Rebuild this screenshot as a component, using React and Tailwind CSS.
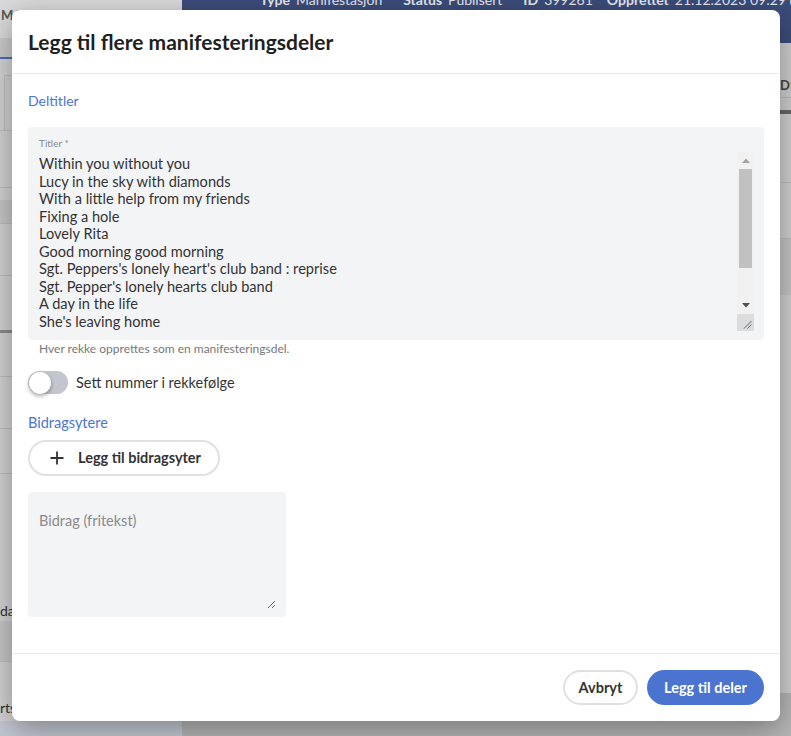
import React from "react";

const titles = [
  "Within you without you",
  "Lucy in the sky with diamonds",
  "With a little help from my friends",
  "Fixing a hole",
  "Lovely Rita",
  "Good morning good morning",
  "Sgt. Peppers's lonely heart's club band : reprise",
  "Sgt. Pepper's lonely hearts club band",
  "A day in the life",
  "She's leaving home",
  "Getting better",
  "Being for the benefit of Mr. Kite!",
  "When I'm sixty-four",
].join("\n");

function Background() {
  return (
    <div className="flex h-[736px] w-[791px]">
      <div className="flex w-[182px] shrink-0 flex-col bg-[#d3d3d3]">
        <div className="h-[38px] overflow-hidden whitespace-nowrap bg-[#dadada] pt-[6px] pl-[1px] text-[13px] font-bold leading-[18px] text-[#555]">MANIFESTASJON</div>
        <div className="h-[19px] bg-[#cbcbcb]"></div>
        <div className="h-[2px] bg-[#4b6cba]"></div>
        <div className="h-[16px] bg-[#d4d4d4]"></div>
        <div className="ml-[4px] h-[55px] border-t border-l border-[#bdbdbd] bg-[#d0d0d0]"></div>
        <div className="h-[57px] border-t border-[#bdbdbd] bg-[#d2d2d2]"></div>
        <div className="h-[13px] border-t border-[#bdbdbd] bg-[#d2d2d2]"></div>
        <div className="h-[23px] bg-[#c6c6c6]"></div>
        <div className="h-[52px] border-t border-[#bdbdbd] bg-[#d2d2d2]"></div>
        <div className="h-[55px] border-t border-[#bdbdbd] bg-[#d2d2d2]"></div>
        <div className="h-[3px] bg-[#8a8a8a]"></div>
        <div className="h-[43px] bg-[#d2d2d2]"></div>
        <div className="h-[52px] border-t border-[#bdbdbd] bg-[#d2d2d2]"></div>
        <div className="h-[45px] border-t border-[#bdbdbd] bg-[#d2d2d2]"></div>
        <div className="h-[128px] border-t border-[#bdbdbd] bg-[#d2d2d2]"></div>
        <div className="h-[20px] bg-[#d2d2d2] pt-[1px] text-[14px] leading-[18px] text-[#333]">da</div>
        <div className="h-[40px] bg-[#c6c6c6]"></div>
        <div className="h-[60px] border-t border-[#bdbdbd] bg-[#d2d2d2] pt-[37px] text-[14px] leading-[18px] text-[#333]">rts</div>
        <div className="flex-1 bg-[#c3c7d2]"></div>
      </div>
      <div className="flex min-w-0 flex-1 flex-col bg-[#cbcbcb]">
        <div className="h-[43px] overflow-hidden bg-[#3c4d7a]">
          <div className="-mt-[9px] flex whitespace-nowrap pl-[78px] text-[14px] leading-[18px] text-[#e6e8f0]">
            <span className="font-bold">Type</span>
            <span className="ml-[6px]">Manifestasjon</span>
            <span className="ml-[21px] font-bold">Status</span>
            <span className="ml-[6px]">Publisert</span>
            <span className="ml-[21px] font-bold">ID</span>
            <span className="ml-[6px]">399261</span>
            <span className="ml-[14px] font-bold">Opprettet</span>
            <span className="ml-[6px]">21.12.2023 09:29 (D</span>
          </div>
        </div>
        <div className="flex h-[54px] justify-end bg-[#cdcdcd]">
          <div className="w-[11px] overflow-hidden pt-[33px] text-[13px] font-bold leading-[18px] text-[#444]">DE</div>
        </div>
        <div className="h-[13px] border-t border-[#bbbbbb] bg-[#cdcdcd]"></div>
        <div className="flex justify-end"><div className="h-[4px] w-[11px] bg-[#666]"></div></div>
        <div className="h-[68px] bg-[#cfcfcf]"></div>
        <div className="h-[56px] border-t border-[#bbbbbb] bg-[#cfcfcf]"></div>
        <div className="h-[57px] border-t border-[#bbbbbb] bg-[#c4c4c4]"></div>
        <div className="h-[398px] bg-[#cfcfcf]"></div>
        <div className="flex-1 bg-[#b6b6b6] pl-[108px] pt-[3px] text-[14px] leading-[18px] text-[#222]">A day in the life</div>
      </div>
    </div>
  );
}

function FakeScrollbar() {
  return (
    <div className="flex w-[17px] shrink-0 flex-col bg-[#f1f1f1]">
      <div className="flex h-[17px] items-center justify-center">
        <svg width="8" height="5" viewBox="0 0 8 5"><path d="M0 5L4 0.5L8 5Z" fill="#a3a3a3" /></svg>
      </div>
      <div className="mx-[2px] h-[99px] bg-[#c1c1c1]"></div>
      <div className="flex-1"></div>
      <div className="flex h-[17px] items-center justify-center">
        <svg width="8" height="5" viewBox="0 0 8 5"><path d="M0 0L8 0L4 4.5Z" fill="#505050" /></svg>
      </div>
      <div className="flex h-[17px] items-end justify-end bg-[#dcdcdc] p-[2px]">
        <svg width="9" height="9" viewBox="0 0 9 9" stroke="#555" strokeWidth="0.9">
          <path d="M1 8.5L8.5 1M4.5 8.5L8.5 4.5" />
        </svg>
      </div>
    </div>
  );
}

function Modal() {
  return (
    <div className="absolute left-[12px] top-[10px] flex h-[711px] w-[768px] flex-col rounded-[8px] bg-white font-['Lato',sans-serif] text-[#222] shadow-[0_8px_30px_rgba(0,0,0,0.35)]">
      <div className="flex h-[64px] items-center border-b border-[#ececec] px-[16px]">
        <h1 className="text-[21px] font-bold text-[#1f1f1f]">Legg til flere manifesteringsdeler</h1>
      </div>
      <div className="flex flex-1 flex-col px-[16px] pt-[18px]">
        <div className="text-[14px] leading-[18px] text-[#4a74d6]">Deltitler</div>
        <div className="mt-[17px] h-[213px] rounded-[4px] bg-[#f3f4f6] pl-[11px] pr-[10px] pt-[10px]">
          <div className="text-[10px] leading-[12px] text-[#888]">Titler *</div>
          <div className="mt-[3px] flex h-[179px]">
            <textarea
              readOnly
              value={titles}
              className="block h-full min-w-0 flex-1 resize-none overflow-hidden bg-transparent p-0 pt-[3px] font-['Lato',sans-serif] text-[14.6px] leading-[17.5px] text-[#333] outline-none"
            />
            <FakeScrollbar />
          </div>
        </div>
        <div className="mt-[3px] pl-[11px] text-[12px] leading-[12px] text-[#777]">Hver rekke opprettes som en manifesteringsdel.</div>
        <div className="mt-[16px] flex items-center gap-[8px]">
          <div className="flex h-[23px] w-[40px] items-center rounded-full bg-[#c3c5cf]">
            <div className="ml-[1px] h-[22px] w-[22px] rounded-full bg-white shadow-[0_2px_4px_rgba(0,0,0,0.35)]"></div>
          </div>
          <span className="text-[14.5px] leading-[18px] text-[#333]">Sett nummer i rekkefølge</span>
        </div>
        <div className="mt-[20px] text-[14.5px] leading-[18px] text-[#4a74d6]">Bidragsytere</div>
        <button className="mt-[8px] flex h-[36px] w-[192px] items-center gap-[14px] rounded-full border-2 border-[#e1e1e1] pl-[20px] text-[14.5px] font-bold text-[#333]">
          <svg width="14" height="14" viewBox="0 0 14 14" fill="none" stroke="#333" strokeWidth="1.8">
            <path d="M7 0.5v13M0.5 7h13" />
          </svg>
          <span>Legg til bidragsyter</span>
        </button>
        <div className="mt-[16px] h-[125px] w-[258px] rounded-[4px] bg-[#f3f4f6] pl-[11px] pr-[10px] pt-[20px] pb-[8px]">
          <textarea
            placeholder="Bidrag (fritekst)"
            className="block h-[97px] w-full resize-y bg-transparent p-0 font-['Lato',sans-serif] text-[14.5px] leading-[18px] text-[#333] outline-none placeholder:text-[#8a8a8a]"
          />
        </div>
      </div>
      <div className="flex h-[68px] items-center justify-end gap-[9px] border-t border-[#ececec] px-[16px]">
        <button className="h-[35px] w-[75px] rounded-full border-2 border-[#e0e0e0] text-[14.5px] font-bold text-[#333]">Avbryt</button>
        <button className="h-[35px] w-[117px] rounded-full bg-[#4a74d0] text-[14.5px] font-bold text-white">Legg til deler</button>
      </div>
    </div>
  );
}

export default function App() {
  return (
    <div className="relative h-[736px] w-[791px] overflow-hidden font-['Lato',sans-serif]">
      <Background />
      <Modal />
    </div>
  );
}
